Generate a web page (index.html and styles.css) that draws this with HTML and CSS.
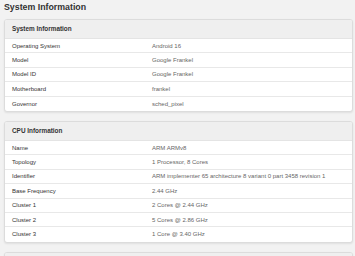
FILE: index.html
```html
<!DOCTYPE html>
<html>
<head>
<meta charset="utf-8">
<link rel="stylesheet" href="styles.css">
</head>
<body>
<h1 class="title">System Information</h1>
<section class="card">
  <div class="card-head">System Information</div>
  <div class="row"><span class="k">Operating System</span><span class="v">Android 16</span></div>
  <div class="row"><span class="k">Model</span><span class="v">Google Frankel</span></div>
  <div class="row"><span class="k">Model ID</span><span class="v">Google Frankel</span></div>
  <div class="row"><span class="k">Motherboard</span><span class="v">frankel</span></div>
  <div class="row"><span class="k">Governor</span><span class="v">sched_pixel</span></div>
</section>
<section class="card">
  <div class="card-head">CPU Information</div>
  <div class="row"><span class="k">Name</span><span class="v">ARM ARMv8</span></div>
  <div class="row"><span class="k">Topology</span><span class="v">1 Processor, 8 Cores</span></div>
  <div class="row"><span class="k">Identifier</span><span class="v">ARM implementer 65 architecture 8 variant 0 part 3458 revision 1</span></div>
  <div class="row"><span class="k">Base Frequency</span><span class="v">2.44 GHz</span></div>
  <div class="row"><span class="k">Cluster 1</span><span class="v">2 Cores @ 2.44 GHz</span></div>
  <div class="row"><span class="k">Cluster 2</span><span class="v">5 Cores @ 2.86 GHz</span></div>
  <div class="row"><span class="k">Cluster 3</span><span class="v">1 Core @ 3.40 GHz</span></div>
</section>
<section class="card">
  <div class="card-head"></div>
</section>
</body>
</html>
```
FILE: styles.css
```css
html, body {
  margin: 0;
  background: #f2f2f2;
}
body {
  padding: 0 2px 0 4px;
  font-family: "Liberation Sans", Arial, sans-serif;
  color: #333;
}
.title {
  margin: 0;
  font-size: 8.8px;
  font-weight: bold;
  line-height: 15px;
  height: 19px;
  color: #333;
}
.card {
  background: #fff;
  border: 1px solid #dcdcdc;
  border-radius: 3px;
  box-shadow: 0 1px 2px rgba(0,0,0,0.08);
  margin-bottom: 9px;
  overflow: hidden;
}
.card-head {
  background: #efefef;
  height: 18px;
  line-height: 18px;
  padding-left: 7px;
  font-size: 6.4px;
  font-weight: bold;
  color: #333;
  border-bottom: 1px solid #e4e4e4;
}
.row {
  display: grid;
  grid-template-columns: 140px 1fr;
  height: 14.4px;
  align-items: center;
  padding-left: 7px;
  font-size: 6px;
  border-bottom: 1px solid #e8e8e8;
  box-sizing: border-box;
}
.row:last-child {
  border-bottom: none;
}
.k {
  color: #333;
}
.v {
  color: #666;
  white-space: nowrap;
}
```
